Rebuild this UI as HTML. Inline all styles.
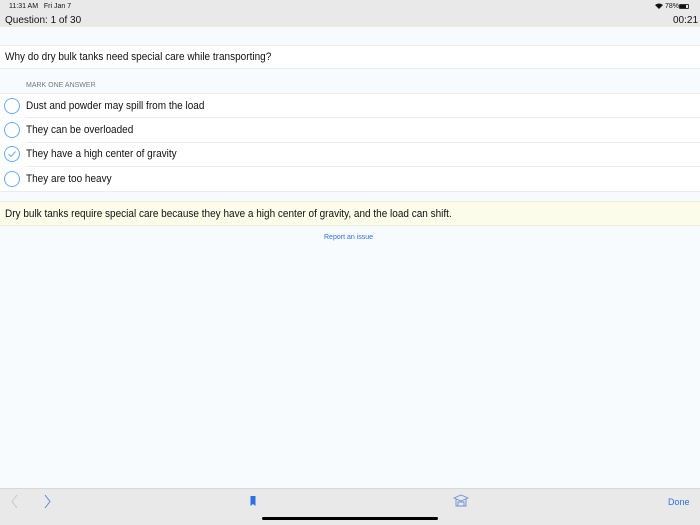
<!DOCTYPE html>
<html><head><style>
*{margin:0;padding:0;box-sizing:border-box}
body{width:700px;height:525px;overflow:hidden;background:#f7fbfe;font-family:"Liberation Sans",sans-serif;color:#111;position:relative}
.abs{position:absolute}
.top{left:0;top:0;width:700px;height:27px;background:#e9e9e9}
.row{position:absolute;left:0;width:700px;background:#fff}
.ans{position:absolute;left:0;width:700px;height:24px;background:#fff;font-size:13px}
.ans span{position:absolute;left:26px;top:7px;font-size:10px;transform:scaleY(1.08)}
.ans .c{position:absolute;left:4px;top:4px;width:16px;height:16px;border:1.3px solid #6aabf0;border-radius:50%}
.sep{position:absolute;left:26px;right:0;height:1px;background:#e8ecef;z-index:2}
</style></head><body>
<div class="abs top"></div>
<div class="abs" style="left:9px;top:3px;font-size:7px">11:31 AM&nbsp;&nbsp; Fri Jan 7</div>
<div class="abs" style="left:655px;top:3px;font-size:7px">
<svg width="8" height="6" viewBox="0 0 8 6" style="vertical-align:-1px"><path d="M0 2Q4 -1 8 2L4 6Z" fill="#111"/></svg> 78%</div>
<div class="abs" style="left:679px;top:4px;width:10px;height:5px;border:1px solid #333;border-radius:1px"><div style="width:6px;height:3px;background:#111"></div></div>
<div class="abs" style="left:5px;top:15px;font-size:10px">Question: 1 of 30</div>
<div class="abs" style="left:673px;top:15px;font-size:10px">00:21</div>
<div class="row" style="top:45px;height:24px;border-top:1px solid #e8ecef;border-bottom:1px solid #e8ecef"></div>
<div class="abs" style="left:5px;top:52px;font-size:10px;transform:scaleY(1.08)">Why do dry bulk tanks need special care while transporting?</div>
<div class="abs" style="left:26px;top:82px;font-size:7px;color:#777">MARK ONE ANSWER</div>
<div class="ans" style="top:93px;border-top:1px solid #e8ecef"><div class="c"></div><span>Dust and powder may spill from the load</span></div>
<div class="ans" style="top:118px"><div class="c"></div><span>They can be overloaded</span></div>
<div class="ans" style="top:142px"><div class="c"><svg width="14" height="14" viewBox="0 0 14 14" style="position:absolute;left:0;top:0"><path d="M3.5 7.2L6 9.5L10.5 4.5" fill="none" stroke="#6aabf0" stroke-width="1"/></svg></div><span>They have a high center of gravity</span></div>
<div class="ans" style="top:167px;border-bottom:1px solid #e8ecef;height:25px"><div class="c"></div><span>They are too heavy</span></div>
<div class="sep" style="top:117px"></div>
<div class="sep" style="top:142px"></div>
<div class="sep" style="top:166px"></div>
<div class="row" style="top:201px;height:25px;background:#fbfce9;border-top:1px solid #eceedd;border-bottom:1px solid #eceedd"></div>
<div class="abs" style="left:5px;top:209px;font-size:10px;transform:scaleY(1.08)">Dry bulk tanks require special care because they have a high center of gravity, and the load can shift.</div>
<div class="abs" style="left:324px;top:234px;font-size:7px;color:#2f6fe6">Report an issue</div>
<div class="abs" style="left:0;top:488px;width:700px;height:37px;background:#e9e9e9;border-top:1px solid #d8d8d8"></div>
<svg class="abs" style="left:10px;top:494px" width="10" height="15"><path d="M7 1L2 7.5L7 14" fill="none" stroke="#c8c8c8"/></svg>
<svg class="abs" style="left:43px;top:494px" width="10" height="15"><path d="M2 1L7 7.5L2 14" fill="none" stroke="#5a8be8"/></svg>
<svg class="abs" style="left:250px;top:496px" width="6" height="10"><path d="M0.5 0H5.5V10L3 8L0.5 10Z" fill="#2f6fe6"/></svg>
<svg class="abs" style="left:453px;top:494px" width="16" height="14"><path d="M1 4L8 1L15 4L8 7Z M3 5V12H13V5 M5 12V8H11V12" fill="none" stroke="#6b8fd8" stroke-width="0.9"/></svg>
<div class="abs" style="left:668px;top:497px;font-size:9px;color:#2f6fe6">Done</div>
<div class="abs" style="left:262px;top:517px;width:176px;height:3px;border-radius:2px;background:#000"></div>
</body></html>
